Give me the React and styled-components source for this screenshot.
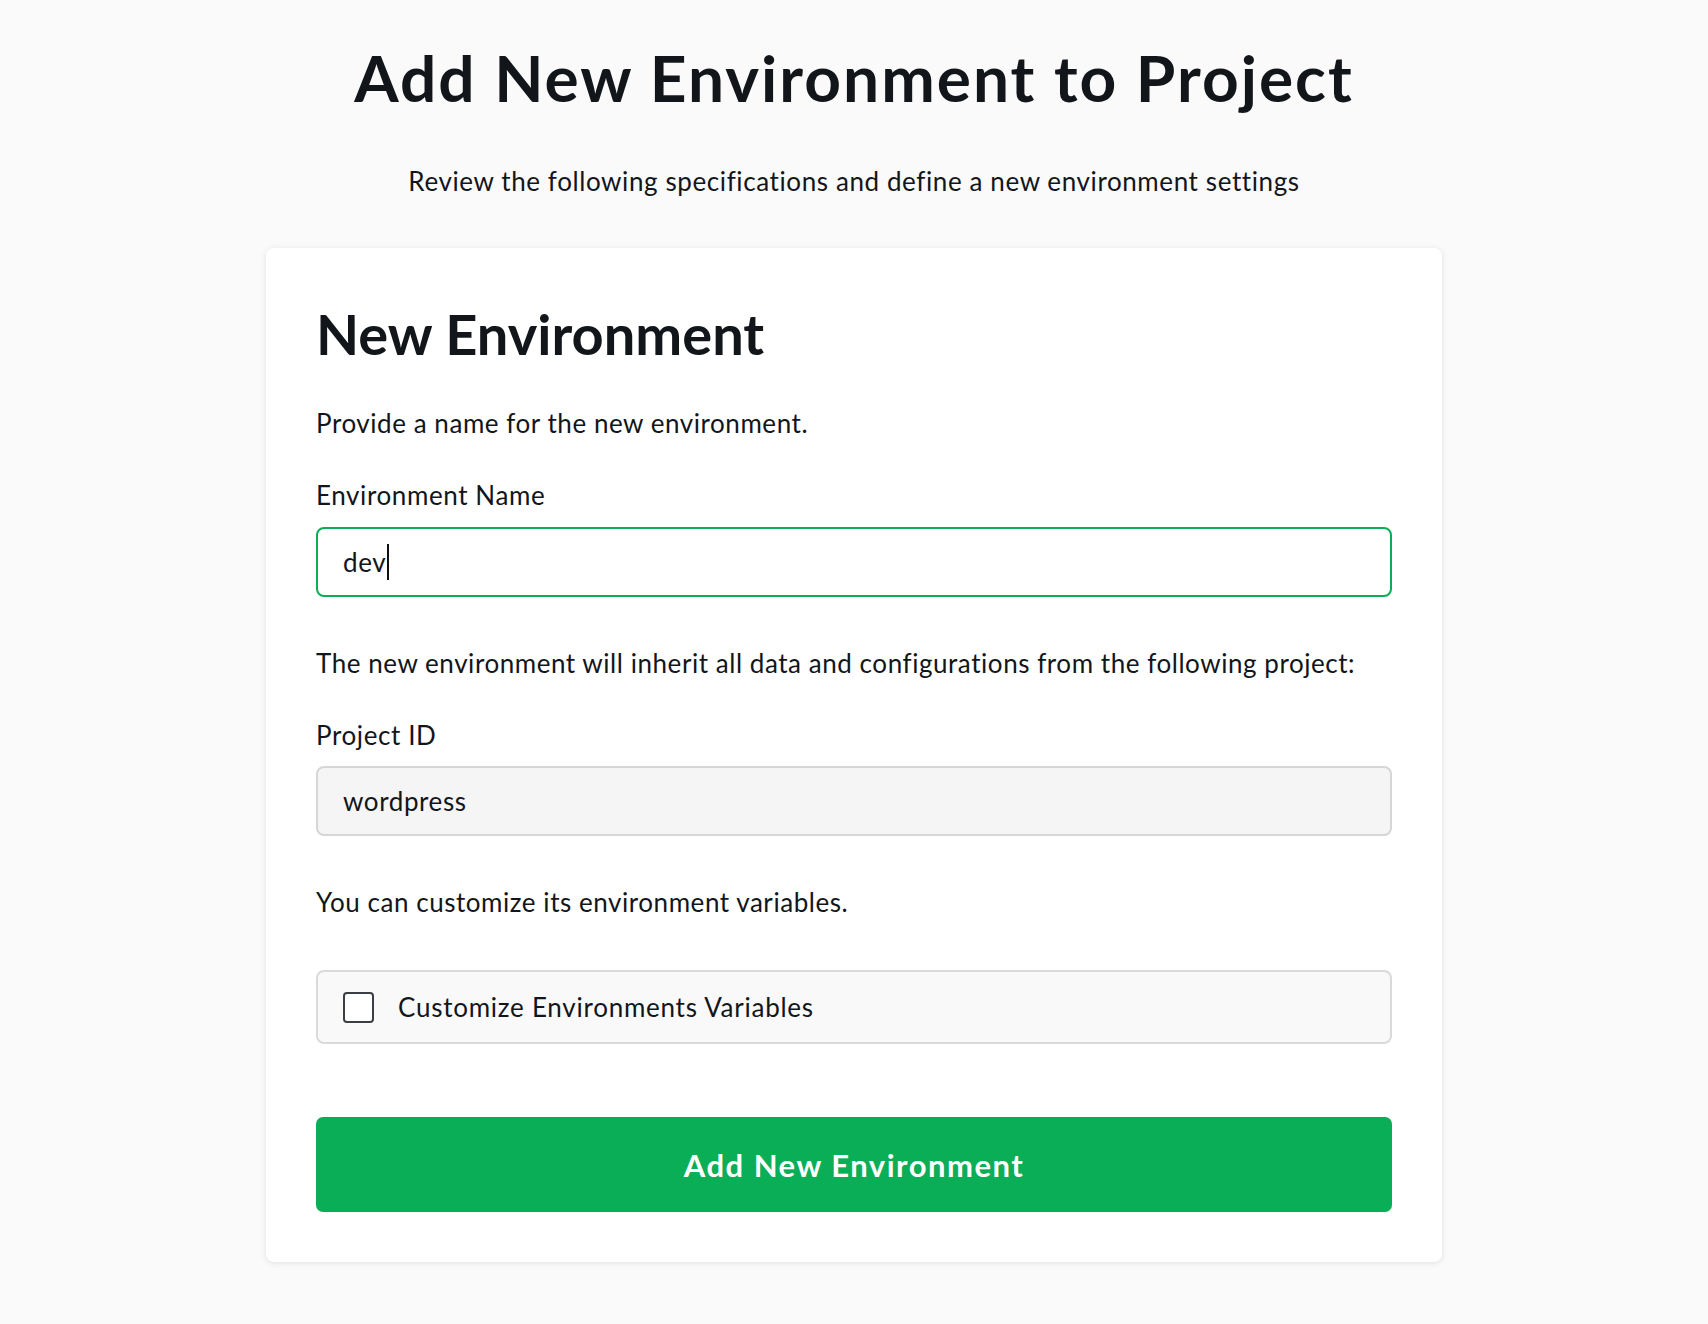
import React from 'react'
import styled, { createGlobalStyle } from 'styled-components'

const GlobalStyle = createGlobalStyle`
  body {
    margin: 0;
    background: #fafafa;
    font-family: Lato, "Noto Sans", sans-serif;
    color: #12161b;
  }
  * { box-sizing: border-box; }
`

const Page = styled.div`
  display: flex;
  flex-direction: column;
  align-items: center;
  padding: 40px 0 60px;
`

const Title = styled.h1`
  margin: 0;
  font-size: 64px;
  line-height: 1.2;
  font-weight: 700;
  letter-spacing: 2px;
`

const Subtitle = styled.p`
  margin: 49px 0 0;
  font-size: 26px;
  line-height: 1.2;
  letter-spacing: 0.6px;
`

const Card = styled.div`
  width: 1176px;
  margin-top: 51px;
  padding: 52px 50px 50px;
  background: #fff;
  border-radius: 8px;
  box-shadow: 0 1px 6px rgba(0, 0, 0, 0.1);
  display: flex;
  flex-direction: column;
`

const Heading = styled.h2`
  margin: 0;
  font-size: 56px;
  line-height: 1.2;
  font-weight: 700;
`

const Text = styled.p`
  margin: ${p => p.$top}px 0 0;
  font-size: 26px;
  line-height: 1.2;
  letter-spacing: 0.55px;
`

const Label = styled.label`
  display: block;
  margin-top: 41px;
  font-size: 26px;
  line-height: 1.2;
  letter-spacing: 0.6px;
`

const Field = styled.div`
  display: flex;
  align-items: center;
  height: 70px;
  margin-top: 15px;
  padding: 0 25px;
  border: 2px solid ${p => (p.$active ? '#0bad56' : '#d6d6d6')};
  border-radius: 8px;
  background: ${p => (p.$active ? '#fff' : '#f5f5f5')};
  font-size: 26px;
  letter-spacing: 0.6px;
`

const Caret = styled.span`
  display: inline-block;
  width: 2px;
  height: 36px;
  margin-left: 1px;
  background: #111;
`

const CheckRow = styled.label`
  display: flex;
  align-items: center;
  gap: 24px;
  height: 74px;
  margin-top: 52px;
  padding: 0 25px;
  border: 2px solid #dadada;
  border-radius: 8px;
  background: #f9f9f9;
  font-size: 26px;
  letter-spacing: 0.75px;
  cursor: pointer;
`

const Box = styled.span`
  width: 31px;
  height: 31px;
  border: 2px solid #3b3e42;
  border-radius: 4px;
  background: #fff;
`

const Button = styled.button`
  height: 95px;
  margin-top: 73px;
  border: none;
  border-radius: 7px;
  background: #09ae56;
  color: #fff;
  font-family: Lato, "Noto Sans", sans-serif;
  font-size: 31px;
  font-weight: 700;
  letter-spacing: 1.5px;
  cursor: pointer;
`

export default function App() {
  return (
    <>
      <GlobalStyle />
      <Page>
        <Title>Add New Environment to Project</Title>
        <Subtitle>Review the following specifications and define a new environment settings</Subtitle>
        <Card>
          <Heading>New Environment</Heading>
          <Text $top={41}>Provide a name for the new environment.</Text>
          <Label>Environment Name</Label>
          <Field $active>
            dev<Caret />
          </Field>
          <Text $top={51}>The new environment will inherit all data and configurations from the following project:</Text>
          <Label>Project ID</Label>
          <Field>wordpress</Field>
          <Text $top={51}>You can customize its environment variables.</Text>
          <CheckRow>
            <Box />
            Customize Environments Variables
          </CheckRow>
          <Button>Add New Environment</Button>
        </Card>
      </Page>
    </>
  )
}
